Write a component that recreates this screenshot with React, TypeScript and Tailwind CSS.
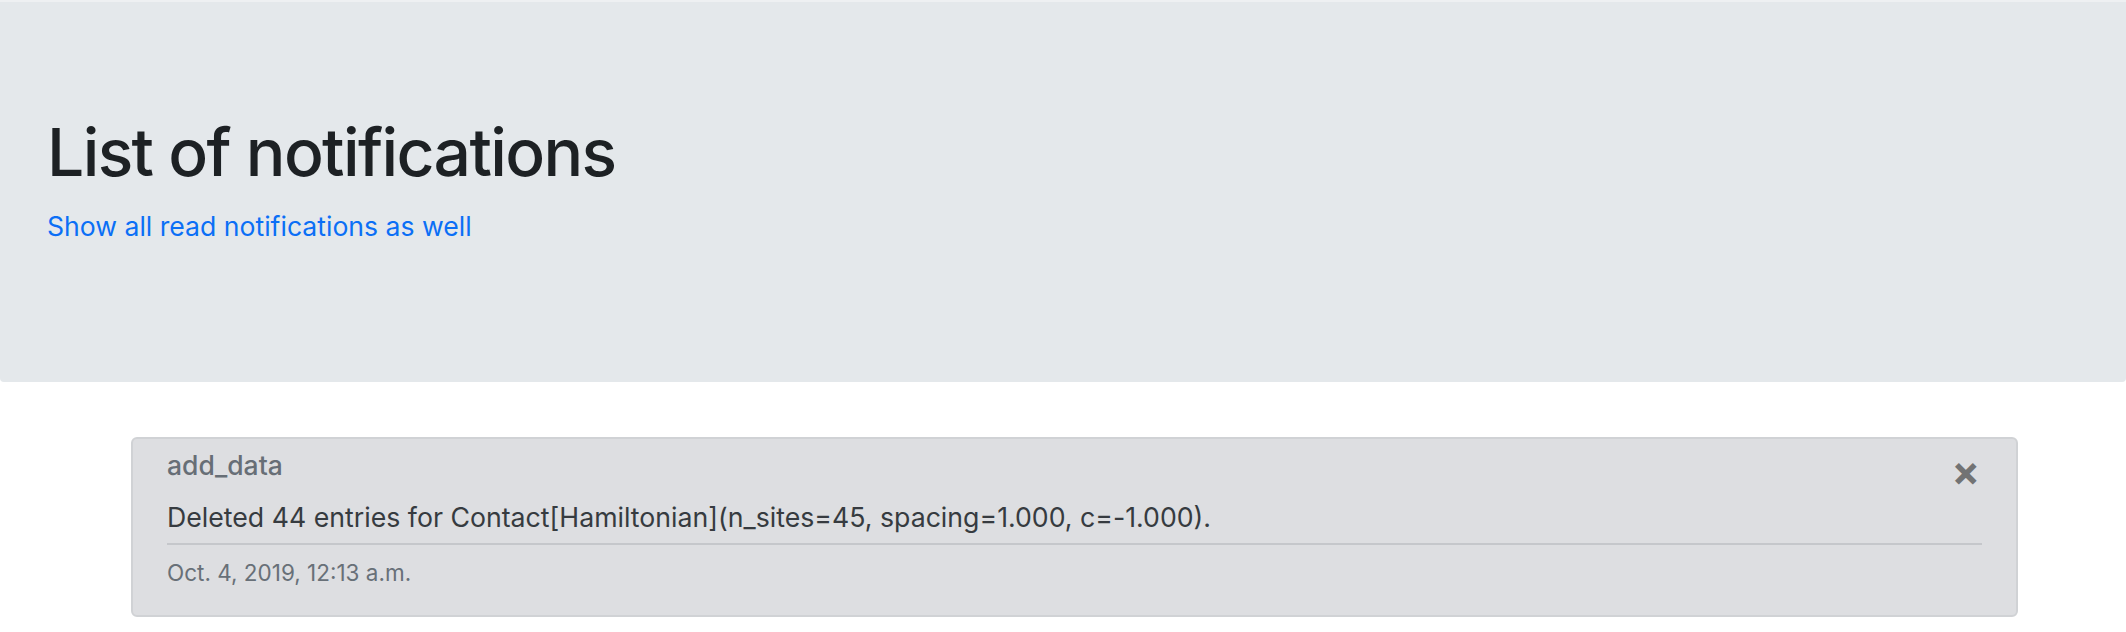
const notifications = [
  {
    id: 1,
    verb: "add_data",
    text: "Deleted 44 entries for Contact[Hamiltonian](n_sites=45, spacing=1.000, c=-1.000).",
    date: "Oct. 4, 2019, 12:13 a.m.",
  },
];

const App = () => {
  return (
    <div className="min-h-screen w-full bg-white font-['Inter','Liberation_Sans',sans-serif]">
      {/* JUMBOTRON */}
      <div className="border-t-2 border-[#eef0f2] bg-[#e4e8eb] h-[382px] pt-[111px] pl-[47px] rounded-b-[4px]">
        <h1 className="text-[66px] leading-[1.2] font-medium tracking-[-0.025em] text-[#1d2124]">
          List of notifications
        </h1>
        <a href="#read" className="mt-[15px] inline-block text-[26.6px] leading-[1.5] text-[#0b6ff6]">
          Show all read notifications as well
        </a>
      </div>

      {/* LIST */}
      <div className="pt-[55px] pl-[131px]">
        {notifications.map((n) => (
          <div
            key={n.id}
            className="w-[1887px] h-[180px] rounded-[6px] border-2 border-[#d0d2d5] bg-[#dddee1] pt-[9px] px-[34px]"
          >
            <div className="flex items-start justify-between">
              <span className="text-[26.5px] leading-[1.3] font-medium text-[#676e76]">{n.verb}</span>
              <button className="mt-[2px] mr-[2px] text-[42px] leading-[1] font-bold text-[#727374]">×</button>
            </div>
            <p className="mt-[8px] text-[26.7px] leading-[1.3] text-[#363b40]">{n.text}</p>
            <div className="mt-[8px] h-[2px] bg-[#c5c7cb]" />
            <p className="mt-[13px] text-[22.5px] leading-[1.3] text-[#687078]">{n.date}</p>
          </div>
        ))}
      </div>
    </div>
  );
};

export default App;
